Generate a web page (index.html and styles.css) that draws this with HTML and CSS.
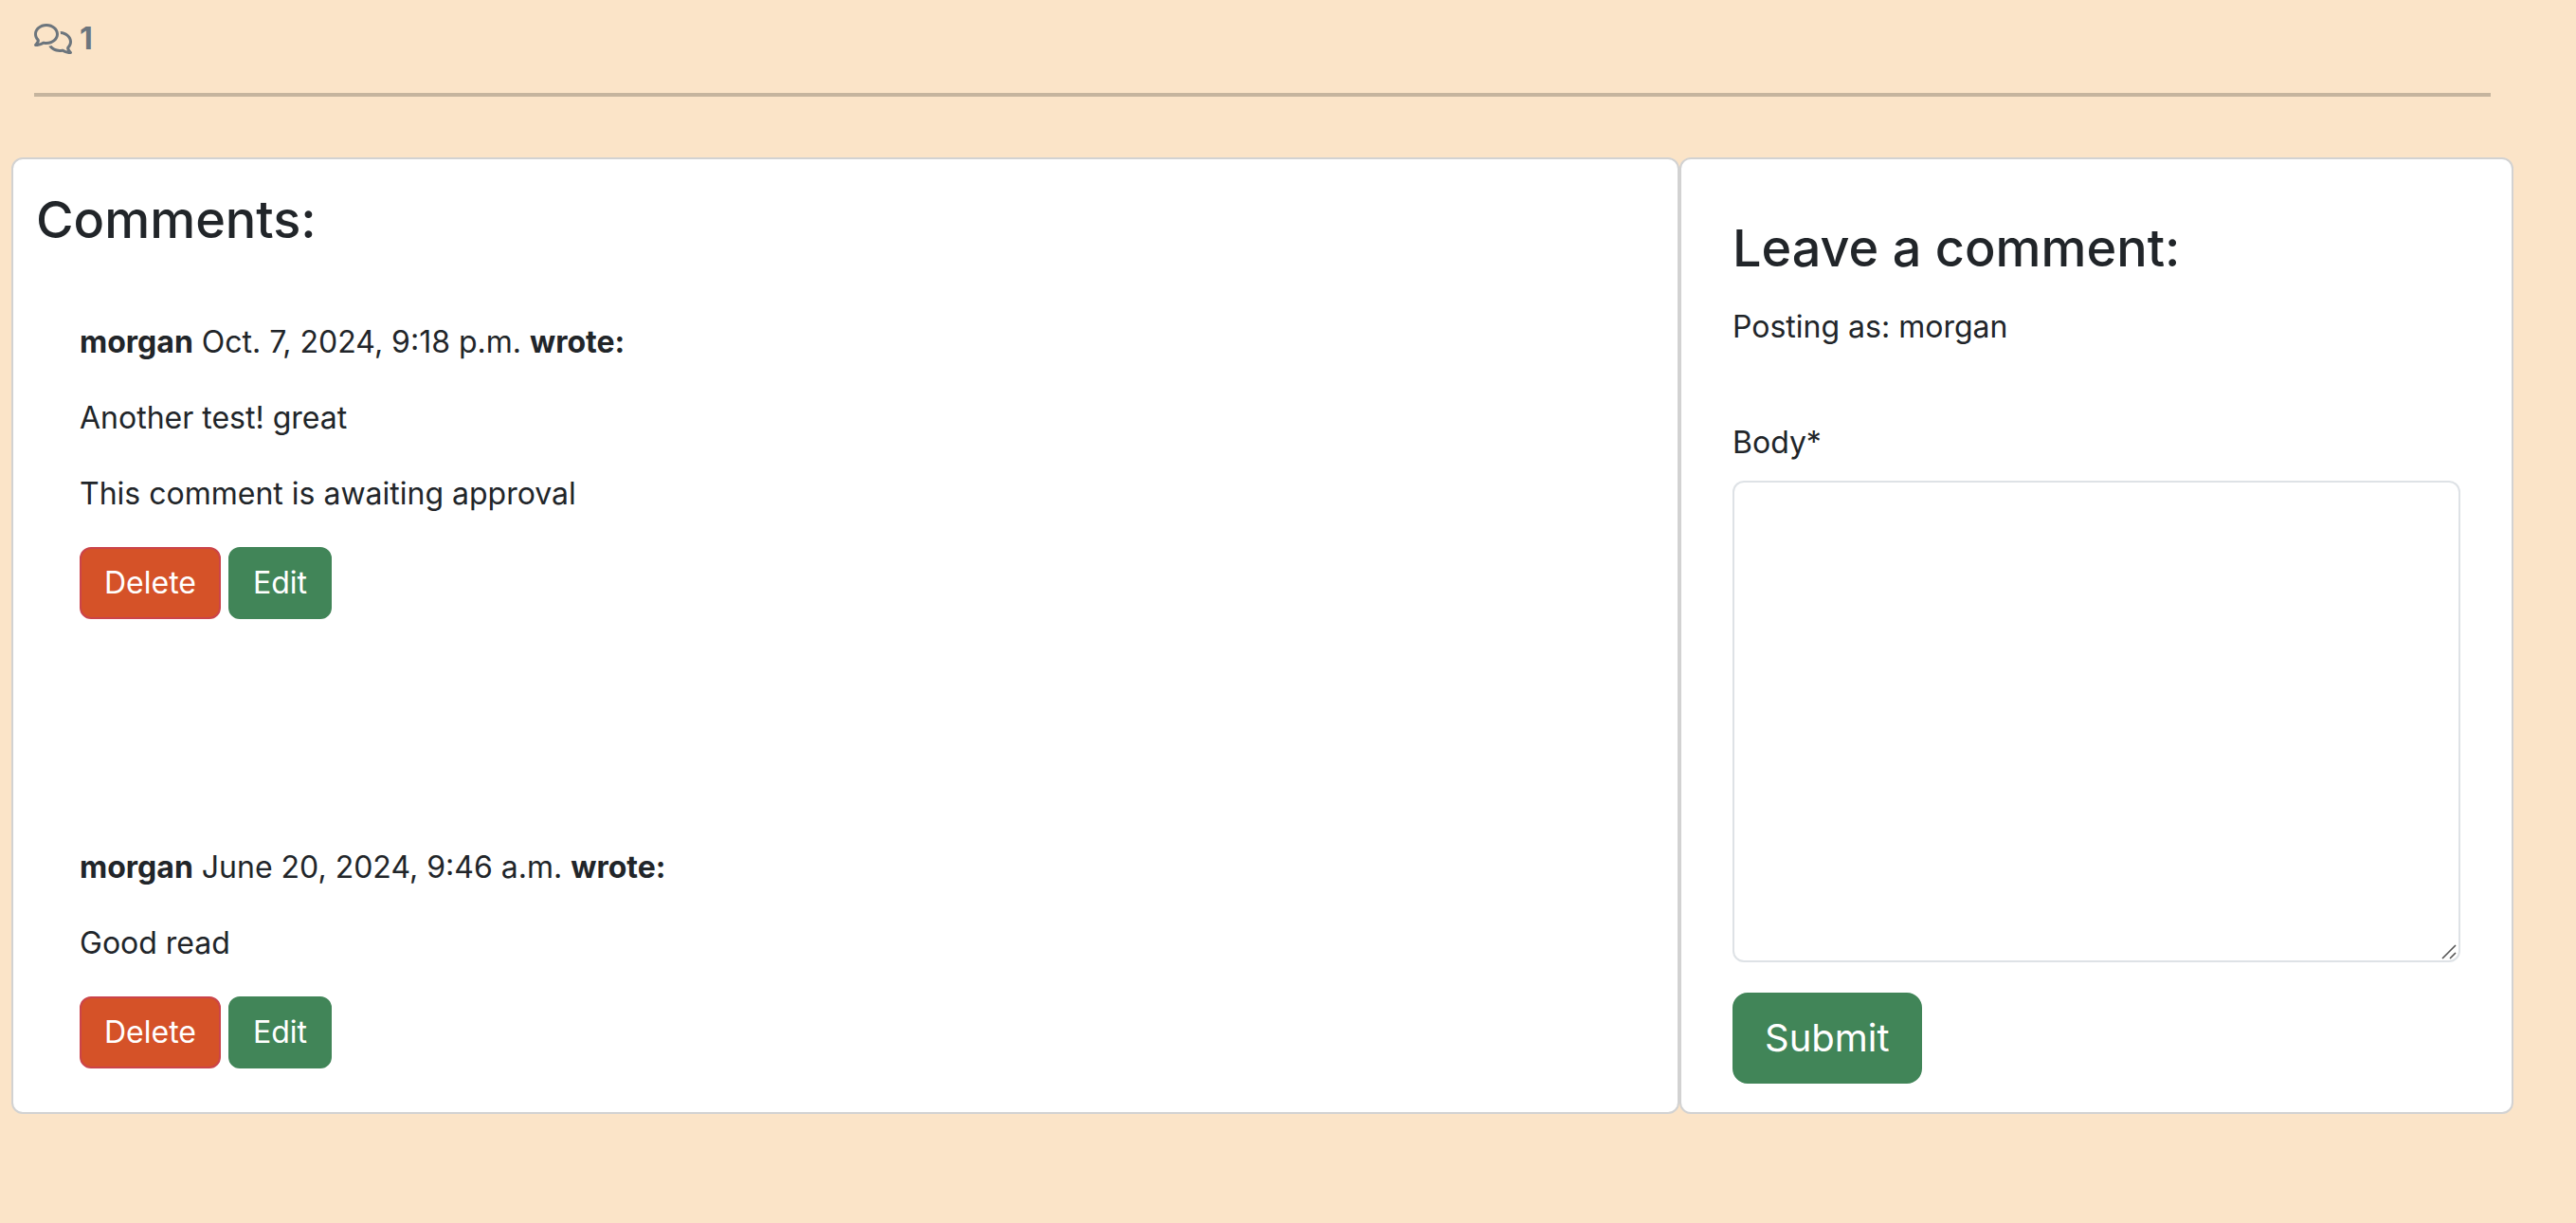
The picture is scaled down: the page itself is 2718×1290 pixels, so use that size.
FILE: index.html
```html
<!DOCTYPE html>
<html lang="en">
<head>
<meta charset="utf-8">
<meta name="viewport" content="width=device-width, initial-scale=1">
<title>Comments</title>
<link rel="stylesheet" href="styles.css">
</head>
<body>
<main class="page">
  <header class="summary">
    <strong class="count">
      <svg class="count-icon" viewBox="0 0 640 512" role="img" aria-label="Comments"><path fill="currentColor" d="M88.2 309.1c9.8-18.3 6.8-40.8-7.5-55.8C59.4 230.9 48 204 48 176c0-63.5 63.8-128 160-128s160 64.5 160 128s-63.8 128-160 128c-13.1 0-25.8-1.3-37.8-3.6c-10.4-2-21.2-.6-30.7 4.2c-4.1 2.1-8.3 4.1-12.6 6c-16 7.2-32.9 13.5-49.9 18c2.8-4.6 5.4-9.1 7.9-13.6c1.1-1.9 2.2-3.9 3.2-5.9zM208 352c114.9 0 208-78.8 208-176S322.9 0 208 0S0 78.8 0 176c0 41.8 17.2 80.1 45.9 110.3c-.9 1.7-1.9 3.5-2.8 5.1c-10.3 18.4-22.3 36.5-36.6 52.1c-6.6 7-8.3 17.2-4.6 25.9C5.8 378.3 14.4 384 24 384c43 0 86.5-13.3 122.7-29.7c4.8-2.2 9.6-4.5 14.2-6.8c15.1 3 30.9 4.5 47.1 4.5zM432 480c16.2 0 31.9-1.6 47.1-4.5c4.6 2.3 9.4 4.6 14.2 6.8C529.5 498.7 573 512 616 512c9.6 0 18.2-5.7 22-14.5c3.8-8.8 2-19-4.6-25.9c-14.2-15.6-26.2-33.7-36.6-52.1c-.9-1.7-1.9-3.4-2.8-5.1C622.8 384.1 640 345.8 640 304c0-94.4-87.9-171.5-198.2-175.8c4.1 15.2 6.2 31.2 6.2 47.8l0 .6c87.2 6.7 144 67.5 144 127.4c0 28-11.4 54.9-32.7 77.2c-14.3 15-17.3 37.6-7.5 55.8c1.1 2 2.2 4 3.2 5.9c2.5 4.5 5.2 9 7.9 13.6c-17-4.5-33.9-10.7-49.9-18c-4.3-1.9-8.5-3.9-12.6-6c-9.5-4.8-20.3-6.2-30.7-4.2c-12.1 2.4-24.8 3.6-37.8 3.6c-61.7 0-110-26.5-136.8-62.3c-16 5.4-32.8 9.4-50 11.8C279 439.8 350 480 432 480z"/></svg>
      1
    </strong>
    <hr class="rule">
  </header>
  <div class="columns">
    <section class="card card-comments">
      <h3 class="title">Comments:</h3>
      <div class="comments">
        <article class="comment">
          <p class="text"><strong>morgan</strong> Oct. 7, 2024, 9:18 p.m. <strong>wrote:</strong></p>
          <p class="text">Another test! great</p>
          <p class="text">This comment is awaiting approval</p>
          <div class="actions">
            <button type="button" class="btn btn-delete">Delete</button>
            <button type="button" class="btn btn-edit">Edit</button>
          </div>
        </article>
        <article class="comment">
          <p class="text"><strong>morgan</strong> June 20, 2024, 9:46 a.m. <strong>wrote:</strong></p>
          <p class="text">Good read</p>
          <div class="actions">
            <button type="button" class="btn btn-delete">Delete</button>
            <button type="button" class="btn btn-edit">Edit</button>
          </div>
        </article>
      </div>
    </section>
    <section class="card card-form">
      <h3 class="title">Leave a comment:</h3>
      <p class="posting">Posting as: morgan</p>
      <form class="form">
        <label class="label" for="body">Body*</label>
        <div class="field">
          <textarea class="textarea" id="body" name="body" required></textarea>
          <svg class="grip" viewBox="0 0 16 16" aria-hidden="true"><path d="M1 15 15 1M9 15l6-6" fill="none" stroke="#555" stroke-width="1.6"/></svg>
        </div>
        <button type="submit" class="btn btn-submit">Submit</button>
      </form>
    </section>
  </div>
</main>
</body>
</html>
```
FILE: styles.css
```css
* {
  box-sizing: border-box;
}

body {
  margin: 0;
  background: #fbe4c8;
  color: #212529;
  font-family: Inter, "Liberation Sans", sans-serif;
  font-size: 32px;
  line-height: 48px;
}

.page {
  padding: 17px 66px 64px 12px;
}

.summary {
  padding: 0 24px;
}

.count {
  display: flex;
  align-items: center;
  gap: 8px;
  color: #6c757d;
}

.count-icon {
  width: 40px;
  height: 32px;
}

.rule {
  height: 4px;
  margin: 33px 0 64px;
  border: 0;
  background: #c5b49e;
}

.columns {
  display: grid;
  grid-template-columns: 2fr 1fr;
}

.card {
  background: #fff;
  border: 2px solid #d2d2d2;
  border-radius: 12px;
}

.card-comments {
  padding: 30px 24px 46px;
}

.card-form {
  padding: 60px 54px 30px;
}

.title {
  margin: 0;
  font-size: 54px;
  font-weight: 500;
  line-height: 67px;
}

.comments {
  display: grid;
  gap: 238px;
  padding: 72px 46px 0;
}

.comment {
  display: grid;
  gap: 32px;
}

.text {
  margin: 0;
}

.actions {
  display: flex;
  gap: 8px;
}

.btn {
  padding: 12px 24px;
  border: 2px solid #418558;
  border-radius: 12px;
  background: #418558;
  color: #fff;
  font: inherit;
  cursor: pointer;
}

.btn-delete {
  border-color: #cb444a;
  background: #d55228;
}

.btn-submit {
  padding: 16px 32px;
  border-radius: 16px;
  font-size: 40px;
  line-height: 60px;
}

.posting {
  margin: 26px 0 74px;
}

.label {
  display: block;
  margin-bottom: 16px;
}

.field {
  position: relative;
  margin-bottom: 32px;
}

.textarea {
  display: block;
  width: 100%;
  height: 508px;
  padding: 12px 24px;
  border: 2px solid #dee2e6;
  border-radius: 12px;
  background: #fff;
  color: inherit;
  font: inherit;
  resize: vertical;
}

.textarea::-webkit-resizer {
  display: none;
}

.grip {
  position: absolute;
  right: 4px;
  bottom: 3px;
  width: 16px;
  height: 16px;
  pointer-events: none;
}
```
